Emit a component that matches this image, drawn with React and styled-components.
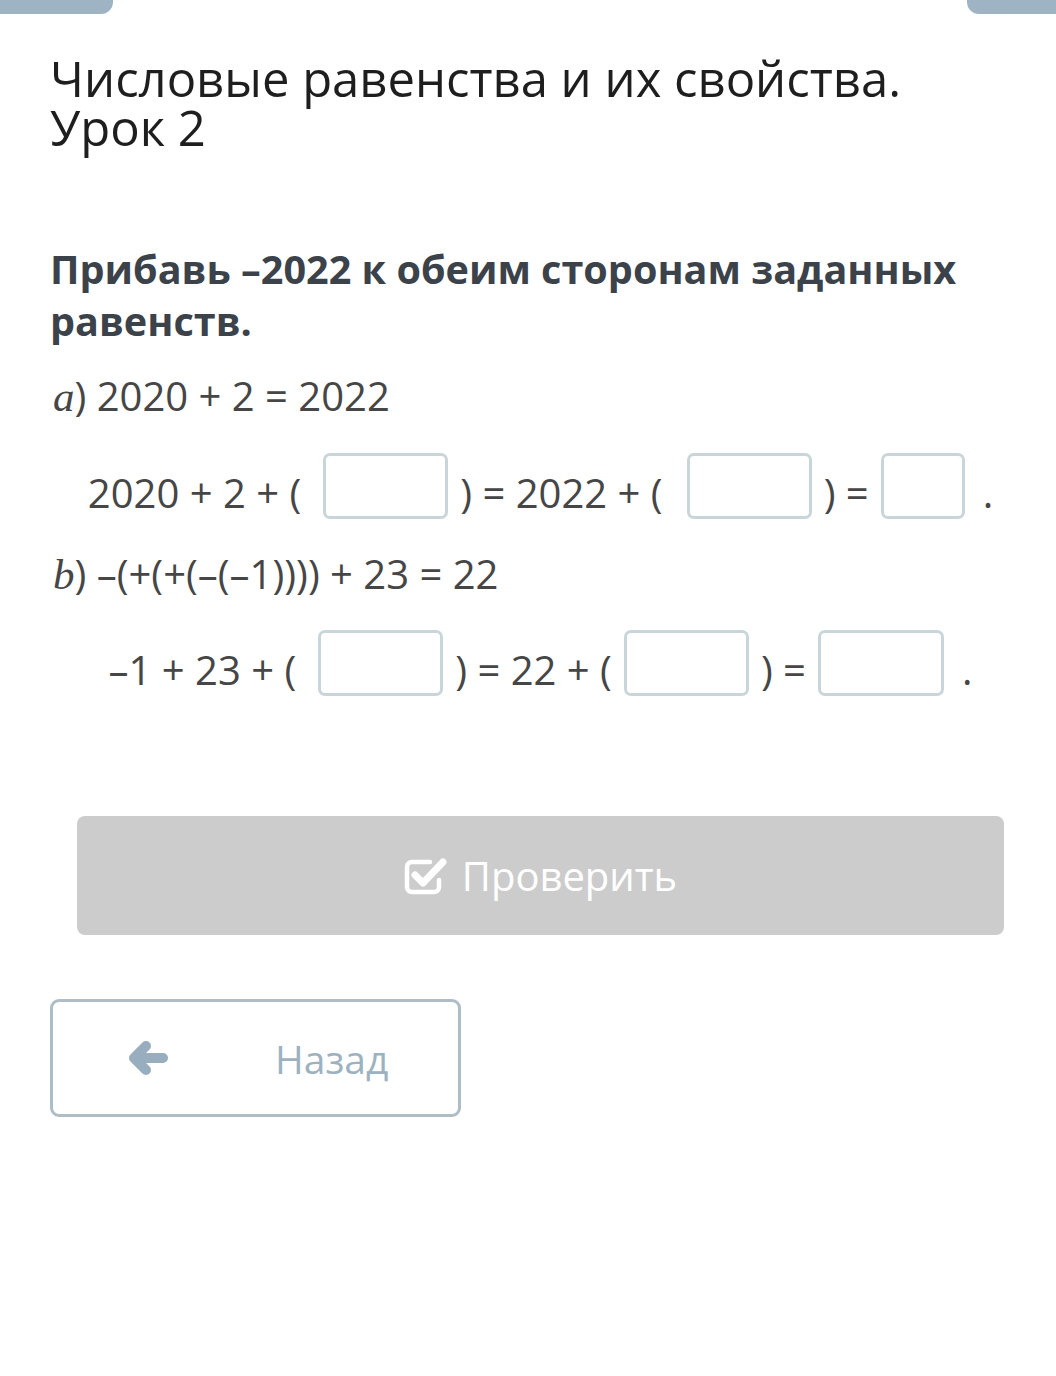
import React from 'react';
import styled, { createGlobalStyle } from 'styled-components';

const GlobalStyle = createGlobalStyle`
  body {
    margin: 0;
    background: #ffffff;
    font-family: "Open Sans", "Noto Sans", sans-serif;
  }
`;

const Page = styled.div`
  width: 1056px;
  min-height: 1376px;
  background: #fff;
`;

const TopBar = styled.div`
  display: flex;
  justify-content: space-between;
  height: 14px;
`;

const Tab = styled.div`
  width: ${(p) => p.$w}px;
  height: 14px;
  background: #9eb4c4;
  border-radius: ${(p) => (p.$side === 'left' ? '0 0 12px 0' : '0 0 0 12px')};
`;

const Content = styled.div`
  padding: 0 25px 0 50px;
`;

const Title = styled.h1`
  margin: 40px 0 0;
  font-weight: 400;
  font-size: 49px;
  line-height: 49px;
  color: #1e1e1e;
`;

const TitleLine = styled.span`
  display: block;
`;

const Task = styled.h2`
  margin: 91px 0 0;
  font-weight: 700;
  font-size: 39.6px;
  line-height: 52px;
  color: #3c424a;
`;

const Statement = styled.div`
  margin-top: ${(p) => p.$top}px;
  font-size: 40px;
  line-height: 50px;
  color: #464646;
  padding-left: 3px;
`;

const Label = styled.span`
  font-family: "Liberation Serif", "DejaVu Serif", serif;
  font-style: italic;
  font-size: 43px;
`;

const Equation = styled.div`
  display: flex;
  align-items: center;
  justify-content: center;
  margin: ${(p) => p.$top}px 27px 0;
  font-size: 40px;
  color: #464646;
  height: 66px;
`;

const Chunk = styled.span`
  padding-top: 12px;
  white-space: pre;
`;

const Box = styled.input`
  box-sizing: border-box;
  width: ${(p) => p.$w}px;
  height: 66px;
  margin: 0 12px 0 ${(p) => p.$l}px;
  border: 3px solid #c9d6d9;
  border-radius: 7px;
  background: #fff;
  outline: none;
  font-size: 36px;
`;

const Dot = styled.span`
  padding-top: 12px;
  margin-left: 6px;
`;

const CheckButton = styled.button`
  display: flex;
  align-items: center;
  justify-content: center;
  gap: 14px;
  width: calc(100% - 54px);
  height: 119px;
  margin: 120px 27px 0;
  border: none;
  border-radius: 8px;
  background: #cccccc;
  color: #ffffff;
  font-family: "Open Sans", sans-serif;
  font-size: 40px;
`;

const BackButton = styled.button`
  display: flex;
  align-items: center;
  box-sizing: border-box;
  width: 411px;
  height: 118px;
  margin-top: 64px;
  padding: 0 0 0 74px;
  border: 3px solid #aebdc6;
  border-radius: 9px;
  background: #fff;
  color: #9db2c1;
  font-family: "Open Sans", sans-serif;
  font-size: 39px;
`;

const BackText = styled.span`
  margin-left: 106px;
`;

const CheckIcon = () => (
  <svg width="44" height="40" viewBox="0 0 44 40">
    <path
      d="M35 24 V31 a5 5 0 0 1 -5 5 H8 a5 5 0 0 1 -5 -5 V11 a5 5 0 0 1 5 -5 H26"
      fill="none"
      stroke="#fff"
      strokeWidth="4.5"
      strokeLinecap="round"
    />
    <path
      d="M11 19 L19 27 L39 6"
      fill="none"
      stroke="#fff"
      strokeWidth="7"
      strokeLinecap="round"
      strokeLinejoin="round"
    />
  </svg>
);

const ArrowIcon = () => (
  <svg width="42" height="36" viewBox="0 0 42 36">
    <path
      d="M7 18 H36 M19 6 L7 18 L19 30"
      fill="none"
      stroke="#98adbd"
      strokeWidth="10"
      strokeLinecap="round"
      strokeLinejoin="round"
    />
  </svg>
);

const Row = ({ parts }) => (
  <>
    {parts.map((p, i) =>
      typeof p === 'string' ? <Chunk key={i}>{p}</Chunk> : <Box key={i} $w={p.w} $l={p.l} />
    )}
  </>
);

export default function App() {
  return (
    <Page>
      <GlobalStyle />
      <TopBar>
        <Tab $w={113} $side="left" />
        <Tab $w={89} $side="right" />
      </TopBar>
      <Content>
        <Title>
          <TitleLine>Числовые равенства и их свойства.</TitleLine>
          <TitleLine>Урок 2</TitleLine>
        </Title>
        <Task>Прибавь –2022 к обеим сторонам заданных равенств.</Task>

        <Statement $top={24}>
          <Label>a</Label>) 2020 + 2 = 2022
        </Statement>
        <Equation $top={31}>
          <Row parts={['2020 + 2 + (', { w: 125, l: 22 }, ') = 2022 + (', { w: 125, l: 24 }, ') =', { w: 84, l: 12 }]} />
          <Dot>.</Dot>
        </Equation>

        <Statement $top={30}>
          <Label>b</Label>) –(+(+(–(–1)))) + 23 = 22
        </Statement>
        <Equation $top={30}>
          <Row parts={['–1 + 23 + (', { w: 125, l: 22 }, ') = 22 + (', { w: 125, l: 12 }, ') =', { w: 126, l: 12 }]} />
          <Dot>.</Dot>
        </Equation>

        <CheckButton>
          <CheckIcon />
          Проверить
        </CheckButton>

        <BackButton>
          <ArrowIcon />
          <BackText>Назад</BackText>
        </BackButton>
      </Content>
    </Page>
  );
}
